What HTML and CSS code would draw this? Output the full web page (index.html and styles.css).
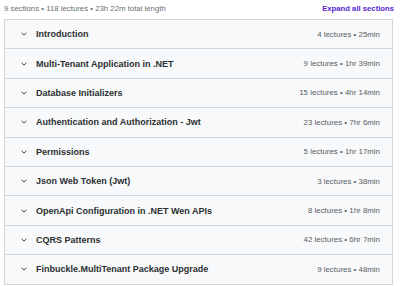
FILE: index.html
```html
<!DOCTYPE html>
<html>
	<head>
		<meta charset="UTF-8" />
		<title>Course content</title>
		<link rel="stylesheet" href="styles.css">
	</head>
	<body>
		<div class="curriculum">
			<div class="curriculum-head">
				<span class="stats">9 sections • 118 lectures • 23h 22m total length</span>
				<a href="javascript:void(0);" class="expand-all">Expand all sections</a>
			</div>
			<ul class="sections">
				<li class="section">
					<span class="chevron"><svg width="6" height="4" viewBox="0 0 6 4"><path d="M0.6 0.8 L3 3.1 L5.4 0.8" fill="none" stroke="#2d2f31" stroke-width="0.9"/></svg></span>
					<span class="title">Introduction</span>
					<span class="meta">4 lectures • 25min</span>
				</li>
				<li class="section">
					<span class="chevron"><svg width="6" height="4" viewBox="0 0 6 4"><path d="M0.6 0.8 L3 3.1 L5.4 0.8" fill="none" stroke="#2d2f31" stroke-width="0.9"/></svg></span>
					<span class="title">Multi-Tenant Application in .NET</span>
					<span class="meta">9 lectures • 1hr 39min</span>
				</li>
				<li class="section">
					<span class="chevron"><svg width="6" height="4" viewBox="0 0 6 4"><path d="M0.6 0.8 L3 3.1 L5.4 0.8" fill="none" stroke="#2d2f31" stroke-width="0.9"/></svg></span>
					<span class="title">Database Initializers</span>
					<span class="meta">15 lectures • 4hr 14min</span>
				</li>
				<li class="section">
					<span class="chevron"><svg width="6" height="4" viewBox="0 0 6 4"><path d="M0.6 0.8 L3 3.1 L5.4 0.8" fill="none" stroke="#2d2f31" stroke-width="0.9"/></svg></span>
					<span class="title">Authentication and Authorization - Jwt</span>
					<span class="meta">23 lectures • 7hr 6min</span>
				</li>
				<li class="section">
					<span class="chevron"><svg width="6" height="4" viewBox="0 0 6 4"><path d="M0.6 0.8 L3 3.1 L5.4 0.8" fill="none" stroke="#2d2f31" stroke-width="0.9"/></svg></span>
					<span class="title">Permissions</span>
					<span class="meta">5 lectures • 1hr 17min</span>
				</li>
				<li class="section">
					<span class="chevron"><svg width="6" height="4" viewBox="0 0 6 4"><path d="M0.6 0.8 L3 3.1 L5.4 0.8" fill="none" stroke="#2d2f31" stroke-width="0.9"/></svg></span>
					<span class="title">Json Web Token (Jwt)</span>
					<span class="meta">3 lectures • 38min</span>
				</li>
				<li class="section">
					<span class="chevron"><svg width="6" height="4" viewBox="0 0 6 4"><path d="M0.6 0.8 L3 3.1 L5.4 0.8" fill="none" stroke="#2d2f31" stroke-width="0.9"/></svg></span>
					<span class="title">OpenApi Configuration in .NET Wen APIs</span>
					<span class="meta">8 lectures • 1hr 8min</span>
				</li>
				<li class="section">
					<span class="chevron"><svg width="6" height="4" viewBox="0 0 6 4"><path d="M0.6 0.8 L3 3.1 L5.4 0.8" fill="none" stroke="#2d2f31" stroke-width="0.9"/></svg></span>
					<span class="title">CQRS Patterns</span>
					<span class="meta">42 lectures • 6hr 7min</span>
				</li>
				<li class="section">
					<span class="chevron"><svg width="6" height="4" viewBox="0 0 6 4"><path d="M0.6 0.8 L3 3.1 L5.4 0.8" fill="none" stroke="#2d2f31" stroke-width="0.9"/></svg></span>
					<span class="title">Finbuckle.MultiTenant Package Upgrade</span>
					<span class="meta">9 lectures • 48min</span>
				</li>
			</ul>
		</div>
	</body>
</html>
```

FILE: styles.css
```css
* {
	margin: 0;
	padding: 0;
	list-style: none;
	box-sizing: border-box;
}

body {
	background-color: #fff;
	font-family: "Liberation Sans", Arial, sans-serif;
	color: #2d2f31;
}

.curriculum {
	width: 389px;
	margin: 0 0 0 4px;
}

.curriculum-head {
	display: flex;
	justify-content: space-between;
	align-items: center;
	height: 19px;
	padding-bottom: 3px;
}

.stats {
	font-size: 7.8px;
	color: #6a6f73;
}

.expand-all {
	font-size: 7.7px;
	font-weight: bold;
	color: #5624d0;
	text-decoration: none;
	margin-right: -1px;
}

.sections {
	border: 1px solid #d1d7dc;
	border-bottom: none;
}

.section {
	display: flex;
	align-items: center;
	height: 29.4px;
	background-color: #f7f9fa;
	border-bottom: 1px solid #d1d7dc;
	padding: 0 12px 0 16px;
}

.chevron {
	display: flex;
	width: 15px;
}

.title {
	flex: 1;
	font-size: 9px;
	font-weight: bold;
	color: #2d2f31;
}

.meta {
	font-size: 7.9px;
	color: #5a5e62;
}
```
